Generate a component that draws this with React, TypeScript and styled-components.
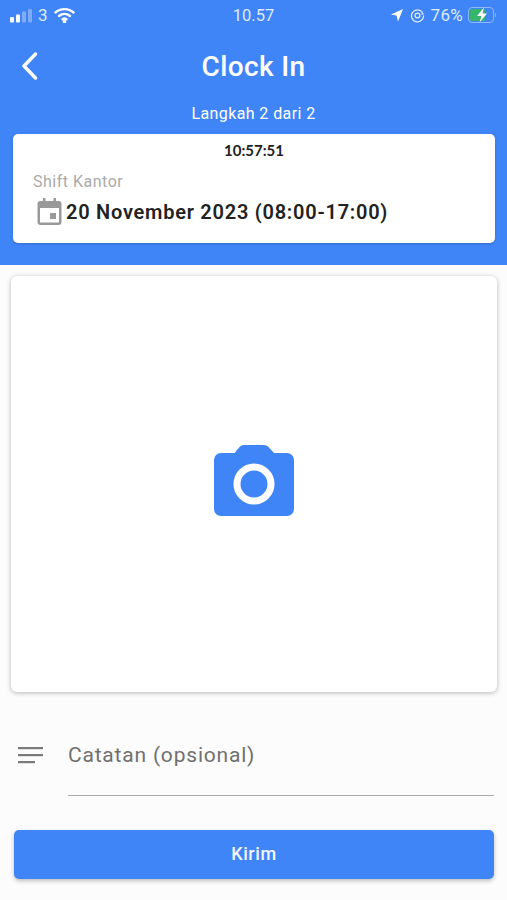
import React from 'react';
import styled, {createGlobalStyle} from 'styled-components';

const GlobalStyle = createGlobalStyle`
    html, body {
        margin: 0;
        padding: 0;
        background: #fcfcfc;
        font-family: Roboto, "Liberation Sans", sans-serif;
    }
`;

const Screen = styled.div`
    width: 507px;
    height: 900px;
    overflow: hidden;
    background: #fcfcfc;
    display: flex;
    flex-direction: column;
`;

const Header = styled.header`
    height: 265px;
    flex: none;
    background: #4085f8;
    color: #fff;
    display: flex;
    flex-direction: column;
`;

const StatusBar = styled.div`
    height: 30px;
    padding: 0 10px;
    display: grid;
    grid-template-columns: 1fr auto 1fr;
    align-items: center;
    font-size: 17px;
    color: #dfeafe;
`;

const StatusGroup = styled.div<{$end?: boolean}>`
    display: flex;
    align-items: center;
    gap: 6px;
    justify-content: ${p => (p.$end ? 'flex-end' : 'flex-start')};
`;

const StatusTime = styled.span`
    font-size: 16.500px;
`;

const BatteryText = styled.span`
    letter-spacing: 0.3px;
    margin-right: -1px;
`;

const NavRow = styled.div`
    height: 72px;
    display: grid;
    grid-template-columns: 60px 1fr 60px;
    align-items: center;
`;

const BackButton = styled.button`
    border: 0;
    padding: 0 0 0 20px;
    background: none;
    display: flex;
    align-items: center;
    height: 40px;
`;

const Title = styled.h1`
    margin: 0;
    font-size: 28px;
    font-weight: 500;
    text-align: center;
    letter-spacing: 0.35px;
`;

const Step = styled.div`
    font-size: 16px;
    text-align: center;
    line-height: 24px;
    height: 32px;
    letter-spacing: 0.4px;
`;

const ShiftCard = styled.section`
    margin: 0 12px 0 13px;
    height: 109px;
    box-sizing: border-box;
    background: #fff;
    border-radius: 5px;
    box-shadow: 0 1px 3px rgba(0, 0, 0, 0.2);
    padding: 8px 20px 0;
`;

const Clock = styled.div`
    font-family: Lato, sans-serif;
    font-size: 15px;
    font-weight: 700;
    line-height: 17px;
    color: #222;
    text-align: center;
`;

const ShiftName = styled.div`
    font-size: 16px;
    line-height: 20px;
    margin-top: 13px;
    color: #aaa;
    letter-spacing: 0.5px;
`;

const DateRow = styled.div`
    display: flex;
    align-items: center;
    gap: 4px;
    margin-top: 6px;
    padding-left: 4px;
    font-size: 20px;
    font-weight: 600;
    color: #222;
    letter-spacing: 0.75px;
`;

const PhotoCard = styled.button`
    flex: none;
    margin: 11px 10px 0 11px;
    height: 416px;
    border: 0;
    padding: 0 0 9px;
    background: #fff;
    border-radius: 6px;
    box-shadow: 0 1px 5px rgba(0, 0, 0, 0.28);
    display: flex;
    align-items: center;
    justify-content: center;
`;

const NoteRow = styled.div`
    margin-top: 43px;
    padding: 0 13px 0 18px;
    display: grid;
    grid-template-columns: 50px 1fr;
`;

const NoteIcon = styled.div`
    padding-top: 12px;
`;

const NoteInput = styled.div`
    height: 61px;
    box-sizing: border-box;
    border-bottom: 1px solid #aaa;
    font-size: 21px;
    line-height: 40px;
    color: #707070;
    letter-spacing: 0.8px;
`;

const SubmitButton = styled.button`
    margin: 34px 13px 0 14px;
    height: 49px;
    flex: none;
    border: 0;
    border-radius: 5px;
    background: #4085f8;
    color: #f4f8ff;
    font-family: Roboto, sans-serif;
    font-size: 18px;
    font-weight: 500;
    letter-spacing: 0.6px;
    padding-bottom: 3px;
    box-shadow: 0 2px 4px rgba(0, 0, 0, 0.25);
`;

export default function App() {
    return (
        <Screen>
            <GlobalStyle/>
            <Header>
                <StatusBar>
                    <StatusGroup>
                        <svg width='22' height='15' viewBox='0 0 22 15'>
                            <rect x='0' y='9' width='4' height='5.500' rx='1' fill='#fff'/>
                            <rect x='6' y='6.500' width='4' height='8' rx='1' fill='#fff'/>
                            <rect x='12' y='3.500' width='4' height='11' rx='1' fill='#7fabf9'/>
                            <rect x='18' y='1' width='4' height='13.500' rx='1' fill='#7fabf9'/>
                        </svg>
                        <span>3</span>
                        <svg width='21' height='16' viewBox='0 0 21 16' fill='none' stroke='#fff' strokeWidth='2.400' strokeLinecap='round'>
                            <path d='M1.500 5.500C6.500 1 14.500 1 19.500 5.500'/>
                            <path d='M5 9c3.200-2.800 7.800-2.800 11 0'/>
                            <path d='M8.500 12.200c1.200-.9 2.800-.9 4 0'/>
                            <circle cx='10.500' cy='14.500' r='.6' fill='#fff'/>
                        </svg>
                    </StatusGroup>
                    <StatusTime>10.57</StatusTime>
                    <StatusGroup $end>
                        <svg width='14' height='14' viewBox='0 0 14 14'>
                            <path d='M13 1 1 6.500l5.500 1L8 13.500z' fill='#fff'/>
                        </svg>
                        <svg width='15' height='15' viewBox='0 0 15 15' fill='none' stroke='#dfeafe' strokeWidth='1.300'>
                            <path d='M12.500 4.500A6 6 0 1 0 13.500 7.500'/>
                            <circle cx='7.500' cy='7.500' r='2.400'/>
                            <path d='M11 6.500h3l-1.500 -2.500z' fill='#dfeafe' stroke='none'/>
                        </svg>
                        <BatteryText>76%</BatteryText>
                        <svg width='29' height='16' viewBox='0 0 29 16'>
                            <rect x='.5' y='.5' width='25' height='15' rx='3.500' fill='none' stroke='#8fb6fa'/>
                            <rect x='2' y='2' width='15' height='12' rx='2' fill='#36b56c'/>
                            <path d='M27 5.500c1.300.4 1.300 4.600 0 5z' fill='#8fb6fa'/>
                            <path d='M16 .5 9 9h4.500l-2 6.500L19 6.500h-4.500z' fill='#fff'/>
                        </svg>
                    </StatusGroup>
                </StatusBar>
                <NavRow>
                    <BackButton aria-label='Kembali'>
                        <svg width='20' height='28' viewBox='0 0 20 28' fill='none' stroke='#fff' strokeWidth='3.400' strokeLinecap='round' strokeLinejoin='round'>
                            <path d='M15.500 2 4 14l11.500 12'/>
                        </svg>
                    </BackButton>
                    <Title>Clock In</Title>
                </NavRow>
                <Step>Langkah 2 dari 2</Step>
                <ShiftCard>
                    <Clock>10:57:51</Clock>
                    <ShiftName>Shift Kantor</ShiftName>
                    <DateRow>
                        <svg width='25' height='27' viewBox='0 0 25 27'>
                            <path fill='#999' fillRule='evenodd' d='M6 0h2.500v3h8V0H19v3h2.500A3 3 0 0 1 24.500 6v18a3 3 0 0 1-3 3h-18a3 3 0 0 1-3-3V6a3 3 0 0 1 3-3H6zM3 10v14a.5.500 0 0 0 .5.500h18a.5.500 0 0 0 .5-.5V10z'/>
                            <rect x='13' y='15' width='6' height='6' fill='#999'/>
                        </svg>
                        <span>20 November 2023 (08:00-17:00)</span>
                    </DateRow>
                </ShiftCard>
            </Header>
            <PhotoCard aria-label='Ambil foto'>
                <svg width='80' height='72' viewBox='0 0 80 72'>
                    <path fill='#4085f8' d='M7 9h13.500l5.500-6.500Q27.500 1 30 1h20q2.500 0 4 1.500L60 9h13a7 7 0 0 1 7 7v49a7 7 0 0 1-7 7H7a7 7 0 0 1-7-7V16a7 7 0 0 1 7-7z'/>
                    <circle cx='40' cy='40' r='17' fill='none' stroke='#fff' strokeWidth='7'/>
                </svg>
            </PhotoCard>
            <NoteRow>
                <NoteIcon>
                    <svg width='25' height='17' viewBox='0 0 25 17' fill='#7a7a7a'>
                        <rect y='0' width='25' height='2.200'/>
                        <rect y='7' width='25' height='2.200'/>
                        <rect y='14' width='17' height='2.200'/>
                    </svg>
                </NoteIcon>
                <NoteInput>Catatan (opsional)</NoteInput>
            </NoteRow>
            <SubmitButton>Kirim</SubmitButton>
        </Screen>
    );
}
